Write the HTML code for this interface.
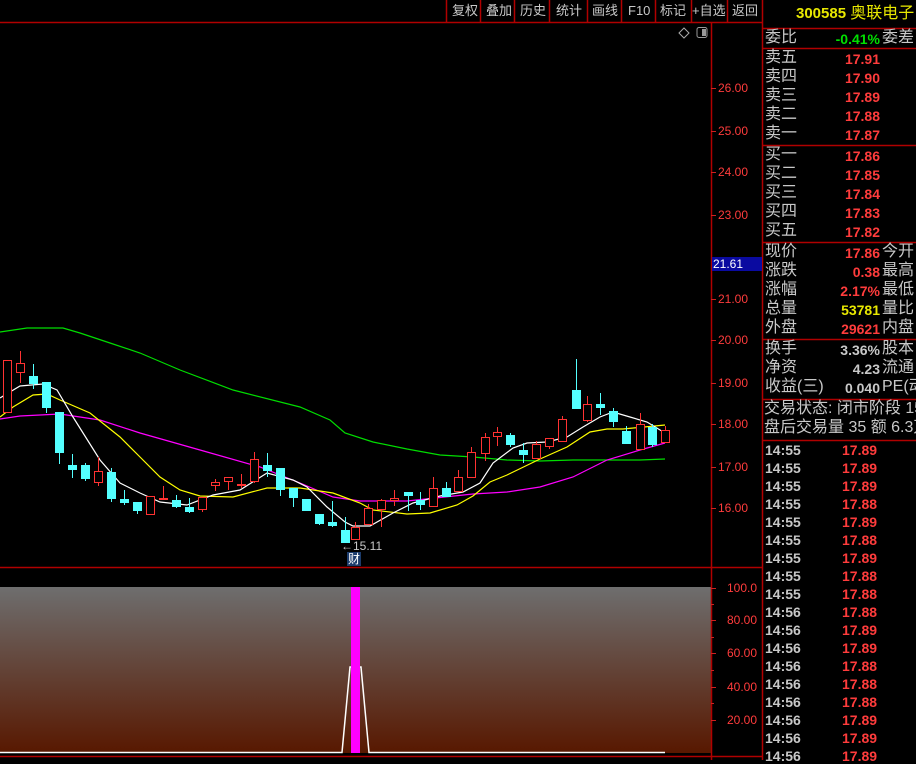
<!DOCTYPE html>
<html><head><meta charset="utf-8"><style>
body{margin:0;background:#000;width:916px;height:760px;overflow:hidden;position:relative;font-family:"Liberation Sans","Noto Sans CJK SC",sans-serif}
.t{position:absolute;white-space:nowrap;line-height:1}
.cn{font-family:"Liberation Sans","Noto Sans CJK SC",sans-serif;font-size:16px;color:#c8c8c8}
.n{font-weight:bold;font-size:14px}
.r{color:#ff3c3c}.g{color:#00e000}.y{color:#e8e800}.w{color:#c8c8c8}
</style></head><body>
<svg width="916" height="760" style="position:absolute;left:0;top:0">
<defs><linearGradient id="gr" x1="0" y1="0" x2="0" y2="1"><stop offset="0" stop-color="#6e6e6e"/><stop offset="1" stop-color="#581800"/></linearGradient></defs>
<rect x="0" y="587" width="711" height="166" fill="url(#gr)"/>
<g stroke="#b00000" stroke-width="1.5" fill="none">
<line x1="0" y1="22.5" x2="762" y2="22.5"/>
<line x1="711.5" y1="22" x2="711.5" y2="760"/>
<line x1="762.5" y1="0" x2="762.5" y2="760"/>
<line x1="0" y1="567.5" x2="762" y2="567.5"/>
<line x1="0" y1="756.5" x2="762" y2="756.5"/>
<line x1="446.5" y1="0" x2="446.5" y2="22"/><line x1="480.5" y1="0" x2="480.5" y2="22"/><line x1="514.5" y1="0" x2="514.5" y2="22"/><line x1="549.5" y1="0" x2="549.5" y2="22"/><line x1="587.5" y1="0" x2="587.5" y2="22"/><line x1="621.5" y1="0" x2="621.5" y2="22"/><line x1="655.5" y1="0" x2="655.5" y2="22"/><line x1="691.5" y1="0" x2="691.5" y2="22"/><line x1="727.5" y1="0" x2="727.5" y2="22"/>
<line x1="762" y1="28.5" x2="916" y2="28.5"/><line x1="762" y1="48.5" x2="916" y2="48.5"/><line x1="762" y1="145.5" x2="916" y2="145.5"/><line x1="762" y1="242.5" x2="916" y2="242.5"/><line x1="762" y1="339.5" x2="916" y2="339.5"/><line x1="762" y1="399.5" x2="916" y2="399.5"/><line x1="762" y1="440.5" x2="916" y2="440.5"/>
</g>
<g stroke="#d02020"><line x1="711" y1="88.5" x2="716" y2="88.5"/><line x1="711" y1="131.5" x2="716" y2="131.5"/><line x1="711" y1="172.5" x2="716" y2="172.5"/><line x1="711" y1="215.5" x2="716" y2="215.5"/><line x1="711" y1="299.5" x2="716" y2="299.5"/><line x1="711" y1="340.5" x2="716" y2="340.5"/><line x1="711" y1="383.5" x2="716" y2="383.5"/><line x1="711" y1="424.5" x2="716" y2="424.5"/><line x1="711" y1="467.5" x2="716" y2="467.5"/><line x1="711" y1="508.5" x2="716" y2="508.5"/>
<line x1="711" y1="588.5" x2="716" y2="588.5"/><line x1="711" y1="604.5" x2="714" y2="604.5"/><line x1="711" y1="620.5" x2="716" y2="620.5"/><line x1="711" y1="637.5" x2="714" y2="637.5"/><line x1="711" y1="653.5" x2="716" y2="653.5"/><line x1="711" y1="670.5" x2="714" y2="670.5"/><line x1="711" y1="687.5" x2="716" y2="687.5"/><line x1="711" y1="703.5" x2="714" y2="703.5"/><line x1="711" y1="720.5" x2="716" y2="720.5"/></g>
<path d="M684 28l5 5-5 5-5-5z" stroke="#aaa" fill="none"/>
<rect x="697" y="27.5" width="10" height="10" rx="2" stroke="#999" fill="none"/><rect x="702" y="29" width="4" height="7" fill="#999"/>
<g fill="none" stroke-width="1.2">
<polyline stroke="#00dd00" points="0,332 27,328 63,328 80,333 110,343 140,353 180,370 233,390 300,407 330,420 345,433 373,442 407,449 440,455 473,457 507,460 540,461 573,460 640,460 665,459"/>
<polyline stroke="#ff00ff" points="0,419 20,416 60,414 100,420 140,433 200,450 260,467 300,483 333,497 360,501 407,501 473,494 507,492 540,487 573,477 607,460 640,450 665,443"/>
<polyline stroke="#ffff00" points="0,417 13,407 33,395 47,394 60,400 90,413 120,437 140,457 160,477 180,490 200,496 233,497 267,488 300,488 333,493 360,503 373,510 407,514 430,513 457,505 473,496 490,482 507,475 540,459 567,447 590,432 607,429 623,429 665,425"/>
<polyline stroke="#ffffff" points="0,398 20,386 43,384 57,390 73,417 100,460 120,483 140,493 160,502 187,505 213,495 240,490 267,473 293,480 307,487 327,507 345,522 353,526 370,526 393,513 413,503 440,496 463,492 480,483 493,463 513,448 527,443 547,442 567,437 583,427 600,417 613,412 630,417 647,422 665,433"/>
</g>
<g id="c"></g>
<rect x="351" y="587" width="9" height="166" fill="#ff00ff"/>
<polyline points="0,752.5 342,752.5 350,667 351,667" stroke="#fff" fill="none" stroke-width="1.5"/>
<polyline points="360,667 361,667 369,752.5 665,752.5" stroke="#fff" fill="none" stroke-width="1.5"/>
<rect x="712" y="257" width="50" height="14" fill="#0a0aa0"/>
<rect x="347" y="552" width="14" height="14" fill="#1c3c6c"/>
</svg>
<script>
var d=[[7,360,412,360,412,1],[20,363,372,351,383,1],[33,376,384,364,389,0],[46,382,408,382,413,0],[59,412,453,412,464,0],[72,465,470,454,478,0],[85,465,479,463,481,0],[98,471,482,457,486,1],[111,472,499,468,502,0],[124,499,503,490,505,0],[137,502,511,502,514,0],[150,496,514,496,514,1],[163,498,499,486,500,1],[176,500,507,495,508,0],[189,507,512,498,513,0],[202,497,509,497,512,1],[215,482,485,479,491,1],[228,477,481,477,490,1],[241,484,485,474,488,1],[254,459,481,452,483,1],[267,465,471,453,477,0],[280,468,490,468,496,0],[293,488,498,488,507,0],[306,499,511,499,511,0],[319,514,524,514,525,0],[332,522,526,501,527,0],[345,530,543,517,543,0],[355,527,539,522,539,1],[368,508,524,504,524,1],[381,500,509,499,527,1],[394,498,500,490,506,1],[408,492,496,492,511,0],[420,500,505,492,510,0],[433,488,506,477,507,1],[446,488,497,482,497,0],[458,477,491,470,491,1],[471,452,477,447,477,1],[485,437,453,433,461,1],[497,432,436,427,446,1],[510,435,445,433,447,0],[523,450,455,443,463,0],[536,444,458,441,458,1],[549,438,446,438,449,1],[562,419,441,416,441,1],[576,390,409,359,409,0],[587,404,420,396,422,1],[600,404,408,393,415,0],[613,411,422,408,427,0],[626,431,444,426,444,0],[640,424,449,413,449,1],[652,427,445,424,447,0],[665,430,442,426,442,1]];
var s='';d.forEach(function(k){var x=k[0],c=k[5]?'#ff3232':'#54ffff';s+='<line x1="'+(x+.5)+'" y1="'+k[3]+'" x2="'+(x+.5)+'" y2="'+k[4]+'" stroke="'+c+'"/>';if(k[5])s+='<rect x="'+(x-3.5)+'" y="'+(k[1]+.5)+'" width="8" height="'+Math.max(1,k[2]-k[1])+'" fill="#000" stroke="'+c+'"/>';else s+='<rect x="'+(x-4)+'" y="'+k[1]+'" width="9" height="'+Math.max(1,k[2]-k[1])+'" fill="'+c+'"/>';});
document.getElementById('c').innerHTML=s;
</script>
<div class="t" style="left:446px;top:4px;width:316px;font-size:13px;color:#c8c8c8">
<span class="t" style="left:6px">复权</span><span class="t" style="left:40px">叠加</span><span class="t" style="left:74px">历史</span><span class="t" style="left:110px">统计</span><span class="t" style="left:146px">画线</span><span class="t" style="left:182px">F10</span><span class="t" style="left:214px">标记</span><span class="t" style="left:246px">+自选</span><span class="t" style="left:286px">返回</span></div>
<div class="t" style="left:718px;top:0;font-size:12px;color:#ff3c3c;line-height:1">
<span class="t" style="top:82px">26.00</span><span class="t" style="top:125px">25.00</span><span class="t" style="top:166px">24.00</span><span class="t" style="top:209px">23.00</span><span class="t" style="top:293px">21.00</span><span class="t" style="top:334px">20.00</span><span class="t" style="top:377px">19.00</span><span class="t" style="top:418px">18.00</span><span class="t" style="top:461px">17.00</span><span class="t" style="top:502px">16.00</span>
<span class="t" style="top:582px;left:9px">100.0</span><span class="t" style="top:614px;left:9px">80.00</span><span class="t" style="top:647px;left:9px">60.00</span><span class="t" style="top:681px;left:9px">40.00</span><span class="t" style="top:714px;left:9px">20.00</span></div>
<div class="t" style="left:713px;top:258px;font-size:12px;color:#fff">21.61</div>
<div class="t" style="left:341px;top:540px;font-size:12px;color:#c8c8c8">←15.11</div>
<div class="t" style="left:348px;top:553px;font-size:12px;color:#fff">财</div>
<div class="t y" style="left:796px;top:6px;font-size:15px;font-weight:bold">300585 <span style="font-weight:normal;font-size:16px">奥联电子</span></div>
<div id="rp"></div>
<script>
var rows=[[30,'委比','-0.41%','g','委差'],[50,'卖五','17.91','r'],[69,'卖四','17.90','r'],[88,'卖三','17.89','r'],[107,'卖二','17.88','r'],[126,'卖一','17.87','r'],[147,'买一','17.86','r'],[166,'买二','17.85','r'],[185,'买三','17.84','r'],[204,'买四','17.83','r'],[223,'买五','17.82','r'],[244,'现价','17.86','r','今开'],[263,'涨跌','0.38','r','最高'],[282,'涨幅','2.17%','r','最低'],[301,'总量','53781','y','量比'],[320,'外盘','29621','r','内盘'],[341,'换手','3.36%','w','股本'],[360,'净资','4.23','w','流通'],[379,'收益(三)','0.040','w','PE(动']];
var h='';rows.forEach(function(r){h+='<div class="t cn" style="left:765px;top:'+r[0]+'px">'+r[1]+'</div><div class="t n '+r[3]+'" style="right:36px;top:'+(r[0]+2)+'px">'+r[2]+'</div>';if(r[4])h+='<div class="t cn" style="left:882px;top:'+r[0]+'px">'+r[4]+'</div>';});
h+='<div class="t cn" style="left:764px;top:401px">交易状态: 闭市阶段 15</div><div class="t cn" style="left:764px;top:420px">盘后交易量 35 额 6.3万</div>';
var tk=[['14:55','17.89'],['14:55','17.89'],['14:55','17.89'],['14:55','17.88'],['14:55','17.89'],['14:55','17.88'],['14:55','17.89'],['14:55','17.88'],['14:55','17.88'],['14:56','17.88'],['14:56','17.89'],['14:56','17.89'],['14:56','17.88'],['14:56','17.88'],['14:56','17.88'],['14:56','17.89'],['14:56','17.89'],['14:56','17.89']];
tk.forEach(function(t,i){var y=443+i*18;h+='<div class="t n w" style="left:765px;top:'+y+'px">'+t[0]+'</div><div class="t n r" style="left:842px;top:'+y+'px">'+t[1]+'</div>';});
document.getElementById('rp').innerHTML=h;
</script>
</body></html>
